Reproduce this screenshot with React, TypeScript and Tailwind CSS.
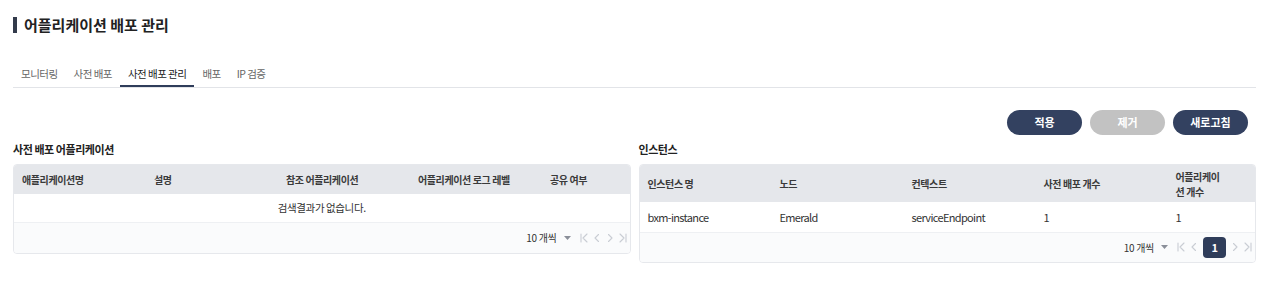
const font = { fontFamily: '"Noto Sans CJK KR", "Noto Sans", sans-serif' };

const tabs = ["모니터링", "사전 배포", "사전 배포 관리", "배포", "IP 검증"];

const PageIcon = ({ d }: { d: string }) => (
  <svg width="8" height="10" viewBox="0 0 8 10" fill="none" stroke="#c9cdd4" strokeWidth="1.1" strokeLinecap="round" strokeLinejoin="round">
    <path d={d} />
  </svg>
);

const Pager = ({ active }: { active?: boolean }) => (
  <div className="flex items-center justify-end h-full pr-[3px] text-[10px] tracking-[-0.03em] text-[#333]">
    <span>10 개씩</span>
    <svg width="7" height="4" viewBox="0 0 7 4" className="ml-[7px] mr-[9px]">
      <path d="M0 0h7L3.5 4z" fill="#8a8f99" />
    </svg>
    <div className="flex items-center gap-[5px]">
      <PageIcon d="M1 1v8M7 1L3 5l4 4" />
      <PageIcon d="M5.5 1.5L2 5l3.5 3.5" />
      {active && (
        <span className="w-[23px] h-[21px] rounded-[4px] bg-[#2f3d5a] text-white font-bold text-[11px] flex items-center justify-center">
          1
        </span>
      )}
      <PageIcon d="M2.5 1.5L6 5L2.5 8.5" />
      <PageIcon d="M7 1v8M1 1l4 4-4 4" />
    </div>
  </div>
);

const AppTable = () => (
  <div className="border border-[#e6e8ec] rounded-[4px] overflow-hidden">
    <table className="w-full table-fixed text-[10px] tracking-[-0.04em]">
      <colgroup>
        <col className="w-[132px]" />
        <col className="w-[132px]" />
        <col className="w-[132px]" />
        <col className="w-[132px]" />
        <col />
      </colgroup>
      <thead>
        <tr className="bg-[#e5e7eb] h-[29px] text-left text-[#3a3a3a]">
          <th className="font-bold px-[8px]">애플리케이션명</th>
          <th className="font-bold px-[8px]">설명</th>
          <th className="font-bold px-[8px]">참조 어플리케이션</th>
          <th className="font-bold px-[8px]">어플리케이션 로그 레벨</th>
          <th className="font-bold px-[8px]">공유 여부</th>
        </tr>
      </thead>
      <tbody>
        <tr className="h-[28px] border-b border-[#eef0f3]">
          <td colSpan={5} className="text-center text-[#333] text-[10.5px]">
            검색결과가 없습니다.
          </td>
        </tr>
      </tbody>
    </table>
    <div className="h-[30px] bg-[#fafbfc]">
      <Pager />
    </div>
  </div>
);

const InstanceTable = () => (
  <div className="border border-[#e6e8ec] rounded-[4px] overflow-hidden">
    <table className="w-full table-fixed text-[10px] tracking-[-0.04em]">
      <colgroup>
        <col className="w-[132px]" />
        <col className="w-[132px]" />
        <col className="w-[132px]" />
        <col className="w-[132px]" />
        <col />
      </colgroup>
      <thead>
        <tr className="bg-[#e5e7eb] h-[37px] text-left text-[#3a3a3a] leading-[15px]">
          <th className="font-bold px-[8px]">인스턴스 명</th>
          <th className="font-bold px-[8px]">노드</th>
          <th className="font-bold px-[8px]">컨텍스트</th>
          <th className="font-bold px-[8px]">사전 배포 개수</th>
          <th className="font-bold pl-[8px] pr-[34px] py-[3px]">어플리케이션 개수</th>
        </tr>
      </thead>
      <tbody>
        <tr className="h-[30px] border-b border-[#eef0f3] text-[#333] text-[11px] tracking-[-0.06em]">
          <td className="px-[8px]">bxm-instance</td>
          <td className="px-[8px]">Emerald</td>
          <td className="px-[8px]">serviceEndpoint</td>
          <td className="px-[8px]">1</td>
          <td className="px-[8px]">1</td>
        </tr>
      </tbody>
    </table>
    <div className="h-[29px] bg-[#fafbfc]">
      <Pager active />
    </div>
  </div>
);

export default function App() {
  return (
    <div style={font} className="bg-white w-[1266px] h-[288px] pl-[13px] pr-[10px] pt-[13px] text-[#222]">
      <div className="flex items-center h-[24px]">
        <span className="w-[4px] h-[16px] bg-[#333b4b] mr-[7px]" />
        <h1 className="text-[15px] font-bold text-[#222]">어플리케이션 배포 관리</h1>
      </div>

      <div className="mt-[26px] flex border-b border-[#e2e4e8]">
        {tabs.map((t) => (
          <div
            key={t}
            className={
              t === "사전 배포 관리"
                ? "px-[8px] h-[24px] flex items-center text-[10.5px] tracking-[-0.05em] text-[#222] border-b-2 border-[#2f3d5a]"
                : "px-[8px] h-[24px] flex items-center text-[10.5px] tracking-[-0.05em] text-[#666] border-b-2 border-transparent"
            }
          >
            {t}
          </div>
        ))}
      </div>

      <div className="mt-[22px] flex justify-end gap-[8px] pr-[8px]">
        <button className="w-[75px] h-[25px] rounded-full bg-[#334160] text-white text-[11px] font-bold">적용</button>
        <button className="w-[75px] h-[25px] rounded-full bg-[#c2c2c2] text-white text-[11px] font-bold">제거</button>
        <button className="w-[75px] h-[25px] rounded-full bg-[#334160] text-white text-[11px] font-bold">새로고침</button>
      </div>

      <div className="mt-[6px] flex gap-[8px]">
        <div className="flex-1">
          <h2 className="text-[11px] font-bold tracking-[-0.04em] leading-[17px] mb-[6px]">사전 배포 어플리케이션</h2>
          <AppTable />
        </div>
        <div className="flex-1">
          <h2 className="text-[11px] font-bold tracking-[-0.04em] leading-[17px] mb-[6px]">인스턴스</h2>
          <InstanceTable />
        </div>
      </div>
    </div>
  );
}
